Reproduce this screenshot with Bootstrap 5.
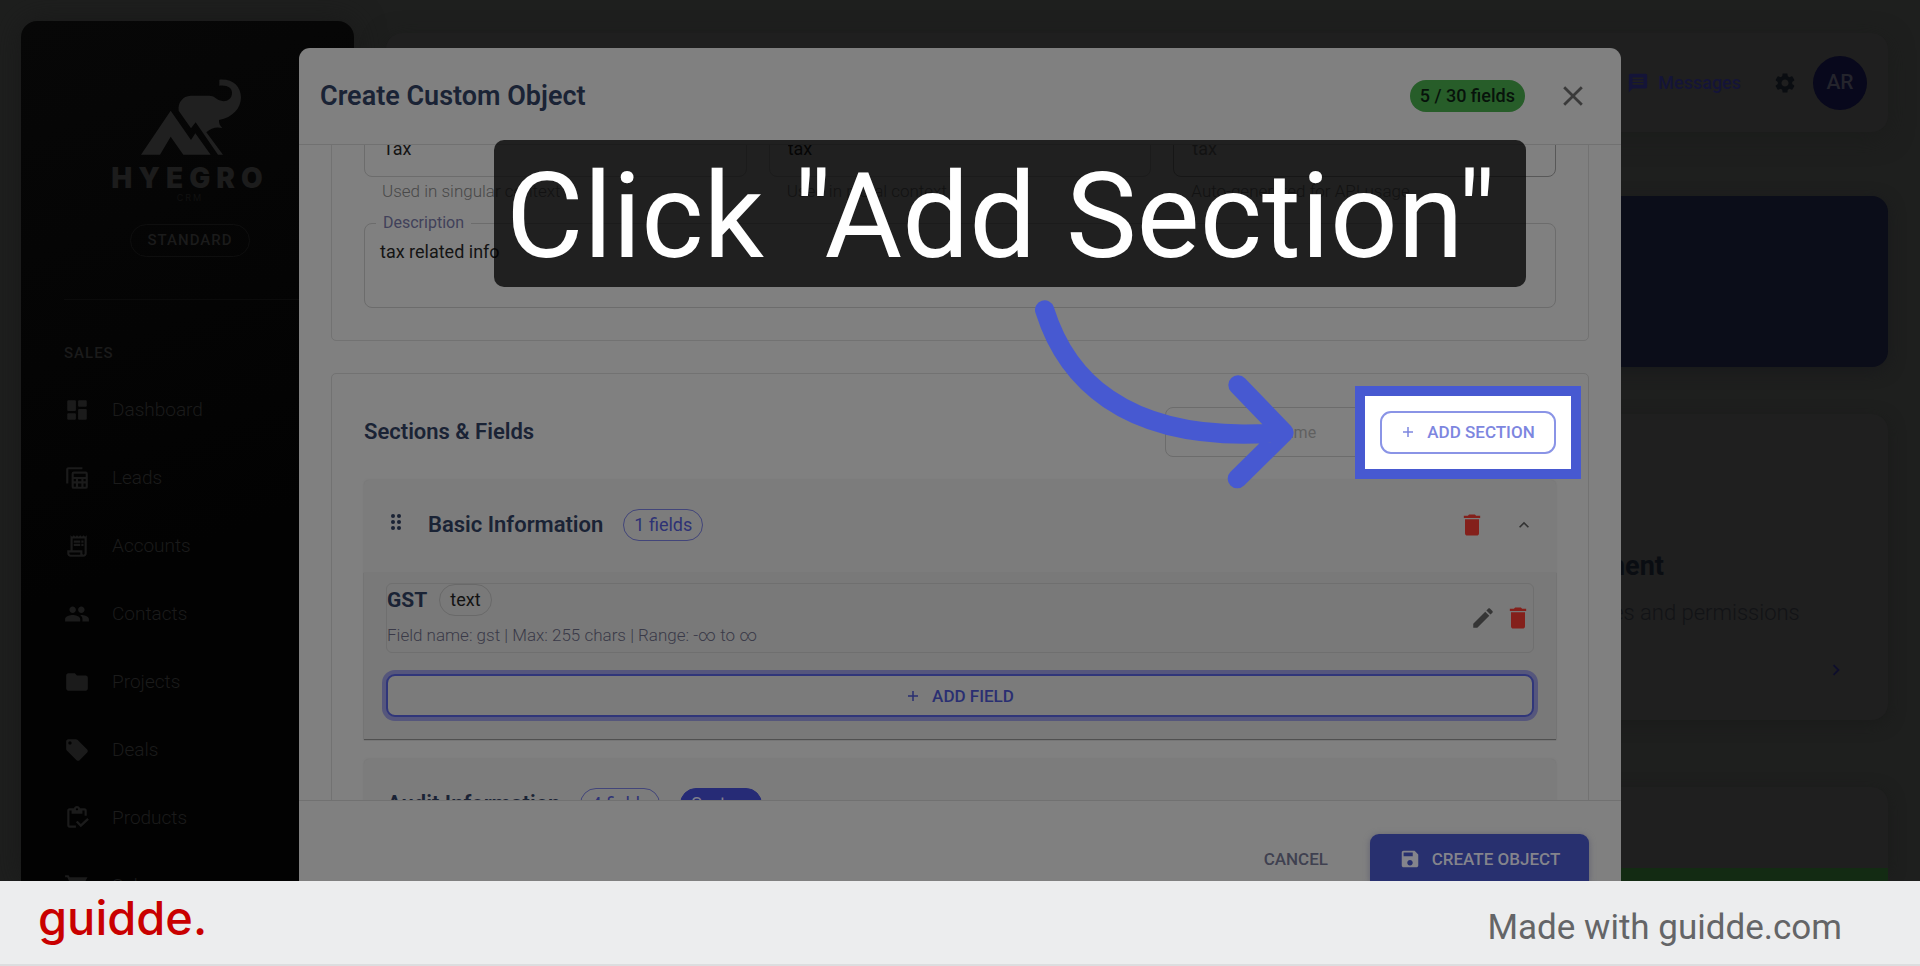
<!DOCTYPE html>
<html lang="en">
<head>
<meta charset="utf-8">
<meta name="viewport" content="width=device-width, initial-scale=1">
<title>Create Custom Object</title>
<link href="https://cdn.jsdelivr.net/npm/bootstrap@5.3.0/dist/css/bootstrap.min.css" rel="stylesheet">
<style>
  body { font-family: Roboto, "Liberation Sans", sans-serif; background: #1e1f1e; color: #1a2335; overflow: hidden; }
  svg { display: block; fill: currentColor; flex: none; }
  a { color: inherit; text-decoration: none; }
  .stage { min-height: 0; }

  /* dimmed application behind the dialog */
  .side { width: 333px; margin: 21px 0 0 21px; padding: 0 0 0 43px; border-radius: 16px 16px 0 0; background: linear-gradient(160deg, #070707, #020202 60%); color: #1b1b1b; box-shadow: 0 0 30px #191919; }
  .brand-block { width: 252px; padding-top: 49px; }
  .brand-mark { margin-left: 10px; }
  .brand-name { margin-top: 3px; font: 900 28px/30px "Inter", Roboto, sans-serif; letter-spacing: 6px; color: #1c1c1c; }
  .brand-sub { font: 400 9px/10px "Inter", sans-serif; letter-spacing: 2px; color: #111; }
  .plan { margin-top: 21px; padding: 0 17px; border: 1px solid #0e0e0e; border-radius: 17px; font-size: 15px; line-height: 31px; font-weight: 500; letter-spacing: 1px; }
  .side-rule { height: 1px; margin: 42px 24px 43px 0; background: #0b0b0b; }
  .side-head { font-size: 15px; line-height: 20px; font-weight: 500; letter-spacing: 1px; }
  .side-nav { padding-top: 13px; }
  .side-nav a { height: 68px; font-size: 19px; font-weight: 300; gap: 22px; }
  .main-area { padding: 33px 32px 0 32px; min-width: 0; }
  .top-card { height: 99px; border-radius: 16px; background: #1f1f1f; padding-right: 21px; box-shadow: 0 6px 24px #1b1c1b; }
  .msg-link { color: #141438; font-size: 18px; font-weight: 500; gap: 9px; }
  .icon-btn { padding: 0; border: 0; background: none; color: inherit; }
  .avatar { width: 54px; height: 54px; background: #08081c; color: #24242c; font-size: 21px; font-weight: 500; }
  .hero { height: 171px; margin-top: 64px; border-radius: 16px; background: #0b0d19; box-shadow: 0 4px 16px #191a1c; }
  .tile { border-radius: 16px; background: #1f1f1f; box-shadow: 0 4px 16px #1a1b1a; }
  .tile-a { height: 306px; margin-top: 47px; padding: 135px 51px 0 0; }
  .tile-text { width: 333px; }
  .tile-title { font-size: 27px; line-height: 34px; font-weight: 700; color: #0a0d12; }
  .tile-desc { font-size: 22px; line-height: 32px; font-weight: 300; color: #121316; margin-top: 14px; }
  .tile-b { height: 81px; margin-top: 67px; border-radius: 16px 16px 0 0; }
  .green-bar { height: 13px; background: #132b13; }

  /* dialog */
  .layer { inset: 0; padding-top: 48px; }
  .dlg { width: 100%; max-width: 1322px; background: #808080; border-radius: 11px 11px 0 0; }
  .dlg-head { height: 97px; padding: 0 38px 0 21px; border-bottom: 1px solid #717171; }
  .dlg-title { font-size: 27px; line-height: 32px; font-weight: 600; color: #1a2335; }
  .count { height: 32px; padding: 0 10px; border-radius: 16px; background: #275d29; color: #07130b; font-size: 18px; line-height: 32px; font-weight: 500; margin-right: 34px; }
  .dlg-body { min-height: 0; padding: 0 32px; }
  .scrolled { margin-top: -61px; }
  .panel { border: 1px solid #727272; border-radius: 5px; padding: 0 32px; }
  .panel + .panel { margin-top: 32px; }
  .field-in { width: 100%; border: 1px solid #6c6c6c; border-radius: 8px; background: transparent; padding: 0 18px; font-size: 18px; color: #141414; outline: 0; }
  .names { gap: 22px; padding-top: 42px; }
  .names .field-in { height: 50px; padding-bottom: 8px; }
  .names .read-only { color: #4a4a4a; border-color: #585858; }
  .hint { font-size: 17px; line-height: 20px; color: #484848; font-weight: 300; padding: 4px 18px 0; }
  .desc-wrap { margin: 22px 0 32px; }
  .desc-wrap .field-in { display: block; height: 85px; resize: none; padding: 15px; line-height: 26px; }
  .desc-wrap label { left: 12px; top: -10px; padding: 0 7px; background: #808080; color: #41415a; font-size: 16px; line-height: 20px; }
  .sec-head { height: 106px; padding-top: 10px; }
  .sec-title { font-size: 22px; line-height: 28px; font-weight: 600; }
  .sec-name { width: 203px; height: 50px; font-size: 16px; }
  .sec-name::placeholder { color: #606060; opacity: 1; }
  .caps-btn { font-size: 17px; font-weight: 500; line-height: 24px; }
  .focus-box { margin-left: 12px; }
  .focus-box::before { content: ""; position: absolute; inset: -25px; border: 10px solid #4759d1; background: #fff; }
  .add-sec { position: relative; width: 176px; height: 43px; border: 2px solid #8a94e6; border-radius: 11px; background: #fff; color: #7d86df; padding: 0; gap: 12px; }
  .arrow { position: absolute; right: calc(100% + 70px); top: -121px; width: 280px; height: 210px; z-index: 3; }
  .acc { background: #7c7c7c; box-shadow: 0 0 2px #727272; border-radius: 5px 5px 0 0; }
  .acc-head { height: 92px; padding: 0 22px 3px 23px; }
  .acc-title { font-size: 22px; line-height: 28px; font-weight: 600; }
  .pill { height: 32px; padding: 0 10px; border: 1px solid #42457a; border-radius: 16px; color: #2e3275; font-size: 18px; line-height: 30px; }
  .pill-type { color: #121212; border-color: #696969; }
  .pill-solid { background: #262b76; border-color: #262b76; color: #7f7f8c; }
  .danger { color: #84201b; }
  .acc-body { background: #797979; padding: 11px 22px 22px; box-shadow: 0 1px 1px #505050; }
  .field-row { border: 1px solid #6f6f6f; border-radius: 6px; height: 70px; padding: 0 1px 0 0; }
  .field-name { font-size: 21px; line-height: 32px; font-weight: 700; }
  .field-meta { font-size: 17px; line-height: 20px; font-weight: 300; color: #3a3a48; margin-top: 9px; }
  .add-field { width: 100%; height: 43px; margin-top: 21px; border: 2px solid #30367a; border-radius: 9px; background: #7b7b7b; box-shadow: 0 0 0 4px #55567c; color: #2a2f72; padding: 0; gap: 12px; }
  .acc + .acc { margin-top: 20px; }
  .dlg-foot { height: 81px; border-top: 1px solid #717171; padding: 33px 32px 0; gap: 42px; }
  .cancel { border: 0; background: none; padding: 0; color: #3f4150; height: 49px; }
  .create { width: 219px; height: 49px; border: 0; border-radius: 9px 9px 0 0; background: #28306f; color: #84848c; gap: 11px; padding: 0; box-shadow: 0 1px 6px #606070; }

  .caption-box { left: 195px; top: 92px; width: 1032px; height: 147px; border-radius: 10px; background: rgba(0, 0, 0, .75); color: #fff; padding: 3px 0 0 12px; font: 400 119px/147px Roboto, "Liberation Sans", sans-serif; white-space: nowrap; z-index: 5; }

  .credit { height: 85px; background: #ecedee; border-bottom: 2px solid #dcdddf; padding: 0 78px 0 38px; }
  .logo-word { font: 500 47px/60px Inter, "Liberation Sans", sans-serif; color: #c90000; padding-bottom: 9px; }
  .made { font-size: 35px; line-height: 44px; color: #646567; padding-top: 10px; }
</style>
</head>
<body class="vh-100 d-flex flex-column">

<div class="stage flex-grow-1 position-relative overflow-hidden d-flex">

  <nav class="side flex-shrink-0" aria-label="Main">
    <div class="brand-block d-flex flex-column align-items-center">
      <svg class="brand-mark" width="130" height="90" viewBox="0 0 390 270" style="color:#202020"><path d="M33 254 122 122l61 88 13-20 46 64h-82l-38-54-32 54z"/><path d="M146 122C143 98 158 78 182 77h56c14 0 20 9 30 14 17 7 38-1 38-23 0-14-14-24-38-21V29c42-3 64 21 65 53 0 33-25 61-66 68-1 10 3 18 10 24-15-4-34-2-48 13l50 67h-15l-67-97-14 18z"/></svg>
      <span class="brand-name">HYEGRO</span>
      <span class="brand-sub">CRM</span>
      <span class="plan">STANDARD</span>
    </div>
    <div class="side-rule"></div>
    <div class="side-head">SALES</div>
    <div class="side-nav">
      <a href="#" class="d-flex align-items-center"><svg width="26" height="26" viewBox="0 0 24 24"><path d="M4 3h6q1 0 1 1v8q0 1-1 1H4q-1 0-1-1V4q0-1 1-1zM4 15h6q1 0 1 1v4q0 1-1 1H4q-1 0-1-1v-4q0-1 1-1zM14 11h6q1 0 1 1v8q0 1-1 1h-6q-1 0-1-1v-8q0-1 1-1zM14 3h6q1 0 1 1v4q0 1-1 1h-6q-1 0-1-1V4q0-1 1-1z"/></svg>Dashboard</a>
      <a href="#" class="d-flex align-items-center"><svg width="26" height="26" viewBox="0 0 24 24"><path fill-rule="evenodd" d="M4 2h13v2H4v13H2V4q0-2 2-2zM9 6h11q2 0 2 2v12q0 2-2 2H9q-2 0-2-2V8q0-2 2-2zm0 2v3h11V8zm0 5v2h2v-2zm4 0v2h3v-2zm5 0v2h2v-2zm-9 4v3h2v-3zm4 0v3h3v-3zm5 0v3h2v-3z"/></svg>Leads</a>
      <a href="#" class="d-flex align-items-center"><svg width="26" height="26" viewBox="0 0 24 24"><path d="M19.5 3.5 18 2l-1.5 1.5L15 2l-1.500 1.500L12 2l-1.500 1.500L9 2 7.500 3.500 6 2v14H3v3c0 1.660 1.340 3 3 3h12c1.660 0 3-1.340 3-3V2l-1.500 1.500zM15 20H6c-.55 0-1-.45-1-1v-1h10v2zm4-1c0 .55-.45 1-1 1s-1-.45-1-1v-3H8V5h11v14z"/><path d="M9 7h6v2H9zM16 7h2v2h-2zM9 10h6v2H9zM16 10h2v2h-2z"/></svg>Accounts</a>
      <a href="#" class="d-flex align-items-center"><svg width="26" height="26" viewBox="0 0 24 24"><path d="M16 11c1.660 0 2.990-1.340 2.990-3S17.660 5 16 5c-1.660 0-3 1.340-3 3s1.340 3 3 3zm-8 0c1.660 0 2.990-1.340 2.990-3S9.660 5 8 5C6.340 5 5 6.340 5 8s1.340 3 3 3zm0 2c-2.330 0-7 1.170-7 3.500V19h14v-2.500c0-2.330-4.670-3.500-7-3.500zm8 0c-.29 0-.62.02-.97.05 1.160.84 1.970 1.970 1.970 3.450V19h6v-2.500c0-2.330-4.670-3.500-7-3.500z"/></svg>Contacts</a>
      <a href="#" class="d-flex align-items-center"><svg width="26" height="26" viewBox="0 0 24 24"><path d="M10 4H4c-1.100 0-1.990.9-1.990 2L2 18c0 1.100.9 2 2 2h16c1.100 0 2-.9 2-2V8c0-1.100-.9-2-2-2h-8l-2-2z"/></svg>Projects</a>
      <a href="#" class="d-flex align-items-center"><svg width="26" height="26" viewBox="0 0 24 24"><path d="M21.410 11.580l-9-9C12.050 2.220 11.550 2 11 2H4c-1.100 0-2 .9-2 2v7c0 .55.22 1.050.59 1.420l9 9c.36.36.86.58 1.410.58.55 0 1.050-.22 1.410-.59l7-7c.37-.36.59-.86.59-1.410 0-.55-.23-1.060-.59-1.420zM5.500 7C4.670 7 4 6.330 4 5.500S4.670 4 5.500 4 7 4.670 7 5.500 6.330 7 5.500 7z"/></svg>Deals</a>
      <a href="#" class="d-flex align-items-center"><svg width="26" height="26" viewBox="0 0 24 24"><path d="M5 5h2v3h10V5h2v5h2V5c0-1.100-.9-2-2-2h-4.180C14.400 1.840 13.300 1 12 1s-2.400.84-2.820 2H5c-1.100 0-2 .9-2 2v14c0 1.100.9 2 2 2h6v-2H5V5zm7-2c.55 0 1 .45 1 1s-.45 1-1 1-1-.45-1-1 .45-1 1-1z"/><path d="M21.500 12 15.510 17.500l-3-3L11 16l4.510 4.500L23 13.500z"/></svg>Products</a>
      <a href="#" class="d-flex align-items-center"><svg width="26" height="26" viewBox="0 0 24 24"><path d="M1 2v2h2l3.600 7.590-1.350 2.450C4.520 15.370 5.480 17 7 17h12v-2H7l1.100-2h7.450c.75 0 1.410-.41 1.750-1.030L21.700 4H5.210l-.94-2z"/></svg>Sales</a>
    </div>
  </nav>

  <main class="main-area flex-grow-1">
    <header class="top-card d-flex align-items-center justify-content-end">
      <a href="#" class="msg-link d-flex align-items-center"><svg width="22" height="22" viewBox="0 0 24 24"><path d="M20 2H4c-1.100 0-1.990.9-1.990 2L2 22l4-4h14c1.100 0 2-.9 2-2V4c0-1.100-.9-2-2-2zm-2 12H6v-2h12v2zm0-3H6V9h12v2zm0-3H6V6h12v2z"/></svg>Messages</a>
      <button type="button" class="icon-btn ms-4" aria-label="Settings" style="color:#0a0d11"><svg width="24" height="24" viewBox="0 0 24 24" class="mx-2"><path d="M19.140 12.940c.04-.3.06-.61.06-.94 0-.32-.02-.64-.07-.94l2.030-1.580c.18-.14.23-.41.12-.61l-1.920-3.320c-.12-.22-.37-.29-.59-.22l-2.390.96c-.5-.38-1.030-.7-1.620-.94l-.36-2.540c-.04-.24-.24-.41-.48-.41h-3.840c-.24 0-.43.17-.47.41l-.36 2.540c-.59.24-1.130.57-1.620.94l-2.390-.96c-.22-.08-.47 0-.59.22L2.740 8.870c-.12.21-.08.47.12.61l2.030 1.580c-.05.3-.09.63-.09.94s.02.64.07.94l-2.030 1.580c-.18.14-.23.41-.12.61l1.920 3.320c.12.22.37.29.59.22l2.390-.96c.5.38 1.030.7 1.620.94l.36 2.540c.05.24.24.41.48.41h3.840c.24 0 .44-.17.47-.41l.36-2.540c.59-.24 1.130-.56 1.620-.94l2.390.96c.22.08.47 0 .59-.22l1.920-3.320c.12-.22.07-.47-.12-.61l-2.010-1.580zM12 15.600c-1.980 0-3.600-1.620-3.600-3.600s1.620-3.600 3.600-3.600 3.600 1.620 3.600 3.600-1.620 3.600-3.600 3.600z"/></svg></button>
      <span class="avatar rounded-circle d-flex align-items-center justify-content-center ms-2">AR</span>
    </header>
    <section class="hero"></section>
    <section class="tile tile-a d-flex flex-column align-items-end">
      <div class="tile-text">
        <div class="tile-title">Management</div>
        <div class="tile-desc">Manage roles and permissions</div>
      </div>
      <svg width="22" height="22" viewBox="0 0 24 24" style="color:#0e0e2c;margin:30px -10px 0 0"><path d="M10 6 8.590 7.410 13.170 12l-4.580 4.590L10 18l6-6z"/></svg>
    </section>
    <section class="tile tile-b"></section>
    <div class="green-bar"></div>
  </main>

  <div class="layer position-absolute d-flex justify-content-center">
    <div class="dlg position-relative d-flex flex-column" role="dialog" aria-labelledby="dlgTitle">
      <div class="dlg-head d-flex align-items-center flex-shrink-0">
        <h1 class="dlg-title mb-0 me-auto" id="dlgTitle">Create Custom Object</h1>
        <span class="count">5 / 30 fields</span>
        <button type="button" class="icon-btn" aria-label="Close" style="color:#3a3a3a"><svg width="28" height="28" viewBox="2 2 20 20" style="margin-right:-4px"><path d="M19 6.410 17.590 5 12 10.590 6.410 5 5 6.410 10.590 12 5 17.590 6.410 19 12 13.410 17.590 19 19 17.590 13.410 12z"/></svg></button>
      </div>

      <div class="dlg-body flex-grow-1 overflow-hidden">
        <div class="scrolled">
          <section class="panel">
            <div class="names d-flex">
              <div class="flex-fill"><input class="field-in" value="Tax" aria-label="Singular name"><div class="hint">Used in singular context</div></div>
              <div class="flex-fill"><input class="field-in" value="tax" aria-label="Plural name"><div class="hint">Used in plural context</div></div>
              <div class="flex-fill"><input class="field-in read-only" value="tax" aria-label="API name" readonly><div class="hint">Auto-generated for API usage</div></div>
            </div>
            <div class="desc-wrap position-relative">
              <label class="position-absolute" for="desc">Description</label>
              <textarea class="field-in" id="desc">tax related info</textarea>
            </div>
          </section>

          <section class="panel">
            <div class="sec-head d-flex align-items-center">
              <h2 class="sec-title mb-0 me-auto">Sections &amp; Fields</h2>
              <input class="field-in sec-name" placeholder="New section name" aria-label="New section name">
              <div class="focus-box position-relative">
                <button type="button" class="add-sec caps-btn d-flex align-items-center justify-content-center"><svg width="14" height="14" viewBox="0 0 28 28"><path d="M12.500 4h3v8.500H24v3h-8.500V24h-3v-8.500H4v-3h8.500z"/></svg>ADD SECTION</button>
                <svg class="arrow" viewBox="0 0 840 630" fill="none" stroke="#4759d1" stroke-width="58" stroke-linecap="round" stroke-linejoin="round"><path fill="none" d="M44 60C100 240 260 470 760 427M624 285 762 428 622 566"/></svg>
              </div>
            </div>

            <div class="acc">
              <div class="acc-head d-flex align-items-center">
                <svg width="18" height="18" viewBox="0 0 18 18" style="margin-bottom:6px"><g><circle cx="6" cy="3" r="2"/><circle cx="12" cy="3" r="2"/><circle cx="6" cy="9" r="2"/><circle cx="12" cy="9" r="2"/><circle cx="6" cy="15" r="2"/><circle cx="12" cy="15" r="2"/></g></svg>
                <h3 class="acc-title mb-0" style="margin-left:23px">Basic Information</h3>
                <span class="pill" style="margin-left:20px">1 fields</span>
                <button type="button" class="icon-btn danger ms-auto" aria-label="Delete section"><svg width="28" height="28" viewBox="0 0 24 24"><path d="M6 19c0 1.100.9 2 2 2h8c1.100 0 2-.9 2-2V7H6v12zM19 4h-3.500l-1-1h-5l-1 1H5v2h14V4z"/></svg></button>
                <button type="button" class="icon-btn" aria-label="Collapse" style="margin-left:28px;color:#333"><svg width="20" height="20" viewBox="0 0 24 24"><path d="m12 8-6 6 1.410 1.410L12 10.830l4.590 4.580L18 14z"/></svg></button>
              </div>
              <div class="acc-body">
                <div class="field-row d-flex align-items-center">
                  <div class="me-auto align-self-start">
                    <div class="d-flex align-items-center gap-2"><span class="field-name">GST</span><span class="pill pill-type ms-1">text</span></div>
                    <div class="field-meta">Field name: gst | Max: 255 chars | Range: -∞ to ∞</div>
                  </div>
                  <button type="button" class="icon-btn" aria-label="Edit field" style="color:#353535"><svg width="26" height="26" viewBox="0 0 24 24"><path d="M3 17.250V21h3.750L17.810 9.940l-3.750-3.750L3 17.250zM20.710 7.040c.39-.39.39-1.020 0-1.410l-2.340-2.340c-.39-.39-1.020-.39-1.410 0l-1.830 1.830 3.750 3.750 1.830-1.830z"/></svg></button>
                  <button type="button" class="icon-btn danger ms-2" aria-label="Delete field"><svg width="28" height="28" viewBox="0 0 24 24"><path d="M6 19c0 1.100.9 2 2 2h8c1.100 0 2-.9 2-2V7H6v12zM19 4h-3.500l-1-1h-5l-1 1H5v2h14V4z"/></svg></button>
                </div>
                <button type="button" class="add-field caps-btn d-flex align-items-center justify-content-center"><svg width="14" height="14" viewBox="0 0 28 28"><path d="M12.500 4h3v8.500H24v3h-8.500V24h-3v-8.500H4v-3h8.500z"/></svg>ADD FIELD</button>
              </div>
            </div>

            <div class="acc">
              <div class="acc-head d-flex align-items-center">
                <h3 class="acc-title mb-0">Audit Information</h3>
                <span class="pill" style="margin-left:20px">4 fields</span>
                <span class="pill pill-solid" style="margin-left:20px">System</span>
              </div>
            </div>
          </section>
        </div>
      </div>

      <div class="dlg-foot d-flex justify-content-end flex-shrink-0">
        <button type="button" class="cancel caps-btn">CANCEL</button>
        <button type="button" class="create caps-btn d-flex align-items-center justify-content-center"><svg width="22" height="22" viewBox="0 0 24 24"><path d="M17 3H5c-1.100 0-2 .9-2 2v14c0 1.100.9 2 2 2h14c1.100 0 2-.9 2-2V7l-4-4zm-5 16c-1.660 0-3-1.340-3-3s1.340-3 3-3 3 1.340 3 3-1.340 3-3 3zm3-10H5V5h10v4z"/></svg>CREATE OBJECT</button>
      </div>

      <div class="caption-box position-absolute">Click "Add Section"</div>
    </div>
  </div>
</div>

<footer class="credit d-flex align-items-center justify-content-between flex-shrink-0">
  <a href="#" class="logo-word">guidde.</a>
  <span class="made">Made with guidde.com</span>
</footer>

<script src="https://cdn.jsdelivr.net/npm/bootstrap@5.3.0/dist/js/bootstrap.bundle.min.js"></script>
</body>
</html>
